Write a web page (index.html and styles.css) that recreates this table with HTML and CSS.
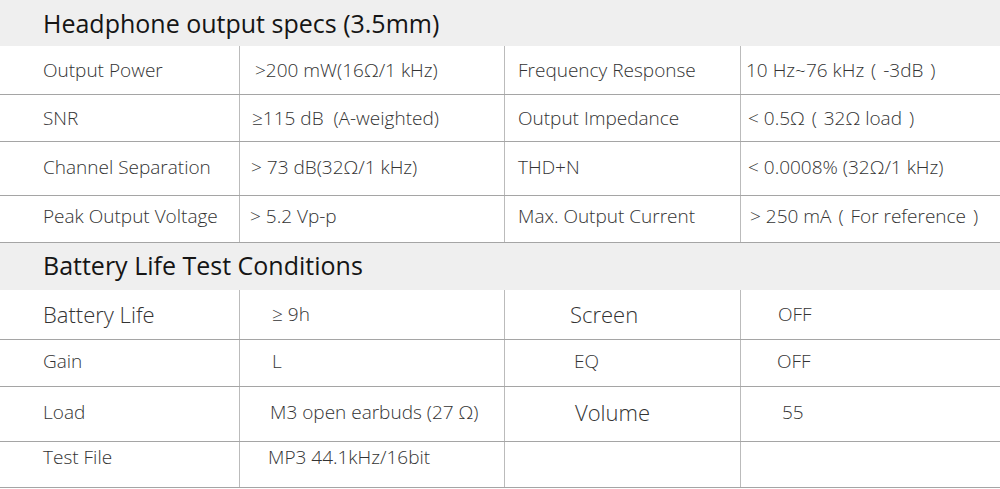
FILE: index.html
```html
<!DOCTYPE html>
<html>
<head>
<meta charset="utf-8">
<link rel="stylesheet" href="styles.css">
</head>
<body>
<div class="page">
  <div class="band"><span class="title">Headphone output specs (3.5mm)</span></div>
  <div class="row r1">
    <div class="c c1">Output Power</div>
    <div class="c c2 p16">&gt;200 mW(16Ω/1 kHz)</div>
    <div class="c c3">Frequency Response</div>
    <div class="c c4 p6">10 Hz~76 kHz&nbsp;<span class="pa">(</span>&nbsp;-3dB&nbsp;<span class="pa">)</span></div>
  </div>
  <div class="row r2">
    <div class="c c1">SNR</div>
    <div class="c c2 p13">≥115 dB&nbsp; (A-weighted)</div>
    <div class="c c3">Output Impedance</div>
    <div class="c c4 p8">&lt; 0.5Ω&nbsp;<span class="pa">(</span>&nbsp;32Ω load&nbsp;<span class="pa">)</span></div>
  </div>
  <div class="row r3">
    <div class="c c1">Channel Separation</div>
    <div class="c c2 p12">&gt; 73 dB(32Ω/1 kHz)</div>
    <div class="c c3">THD+N</div>
    <div class="c c4 p8">&lt; 0.0008% (32Ω/1 kHz)</div>
  </div>
  <div class="row r4">
    <div class="c c1">Peak Output Voltage</div>
    <div class="c c2 p11">&gt; 5.2 Vp-p</div>
    <div class="c c3">Max. Output Current</div>
    <div class="c c4 p10">&gt; 250 mA&nbsp;<span class="pa">(</span>&nbsp;For reference&nbsp;<span class="pa">)</span></div>
  </div>
  <div class="band band2"><span class="title">Battery Life Test Conditions</span></div>
  <div class="row b1">
    <div class="c c1 big">Battery Life</div>
    <div class="c c2 p33">≥ 9h</div>
    <div class="c c3 p66 big">Screen</div>
    <div class="c c4 p38">OFF</div>
  </div>
  <div class="row b2">
    <div class="c c1">Gain</div>
    <div class="c c2 p33">L</div>
    <div class="c c3 p70">EQ</div>
    <div class="c c4 p37">OFF</div>
  </div>
  <div class="row b3">
    <div class="c c1">Load</div>
    <div class="c c2 p31">M3 open earbuds (27 Ω)</div>
    <div class="c c3 p71 big">Volume</div>
    <div class="c c4 p42">55</div>
  </div>
  <div class="row b4">
    <div class="c c1">Test File</div>
    <div class="c c2 p29">MP3 44.1kHz/16bit</div>
    <div class="c c3"></div>
    <div class="c c4"></div>
  </div>
</div>
</body>
</html>
```
FILE: styles.css
```css
html, body {
  margin: 0;
  padding: 0;
  background: #ffffff;
}
.page {
  width: 1000px;
  font-family: "Open Sans", "Liberation Sans", sans-serif;
  color: #333333;
}
.band {
  background: #efefef;
  height: 46px;
  display: flex;
  align-items: center;
  padding-left: 43px;
  padding-bottom: 1px;
  box-sizing: border-box;
}
.band2 {
  height: 47px;
  padding-bottom: 3px;
}
.title {
  font-size: 25px;
  font-weight: 400;
  color: #151515;
}
.row {
  display: grid;
  grid-template-columns: 239px 265px 236px 1fr;
  border-bottom: 1px solid #a5a5a5;
  box-sizing: border-box;
}
.r1 { height: 49px; }
.r2 { height: 47px; }
.r3 { height: 54px; }
.r4 { height: 47px; }
.b1 { height: 50px; }
.b2 { height: 47px; }
.b3 { height: 55px; }
.b4 { height: 46px; }
.c {
  display: flex;
  align-items: center;
  font-size: 19px;
  font-weight: 300;
  white-space: nowrap;
}
.c + .c {
  border-left: 1px solid #bbbbbb;
}
.c1 { padding-left: 43px; }
.c3 { padding-left: 13px; }
.big { font-size: 22px; }
.pa { margin: 0 2px; }
.r3 .c { padding-bottom: 3px; }
.r4 .c { padding-bottom: 6px; }
.b1 .c { padding-bottom: 2px; }
.b2 .c { padding-bottom: 5px; }
.b3 .c { padding-bottom: 5px; }
.b4 .c { padding-bottom: 15px; }
.p6 { padding-left: 5px; }
.p8 { padding-left: 7px; }
.p10 { padding-left: 9px; }
.p11 { padding-left: 10px; }
.p12 { padding-left: 11px; }
.p13 { padding-left: 12px; }
.p16 { padding-left: 15px; }
.p29 { padding-left: 28px; }
.p31 { padding-left: 30px; }
.p33 { padding-left: 32px; }
.p37 { padding-left: 36px; }
.p38 { padding-left: 37px; }
.p42 { padding-left: 41px; }
.p66 { padding-left: 65px; }
.p70 { padding-left: 69px; }
.p71 { padding-left: 70px; }
```
